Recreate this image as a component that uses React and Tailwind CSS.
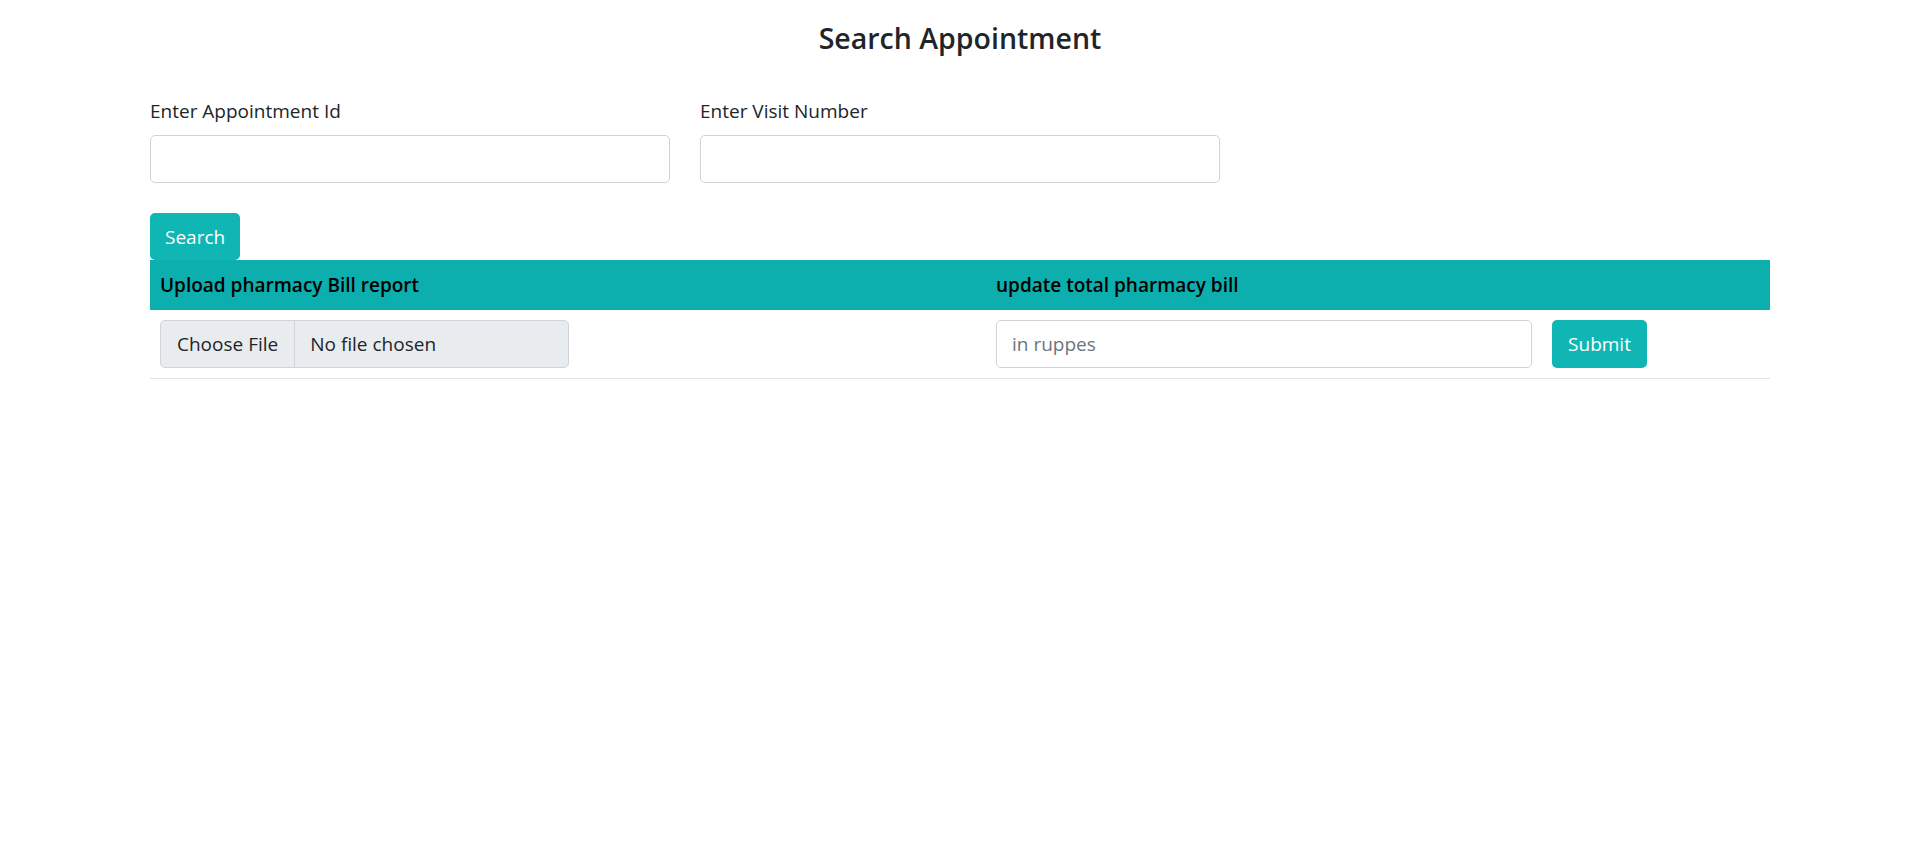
import React from "react";

export default function App() {
  return (
    <div className="min-h-screen bg-white text-[#212529] font-['Open_Sans',_'Noto_Sans',_sans-serif]">
      <div className="mx-auto w-[1650px] px-[15px]">
        {/* Title */}
        <h4 className="pt-[20px] text-center text-[28.5px] font-semibold leading-[36px] text-[#212529]">
          Search Appointment
        </h4>

        {/* Search fields */}
        <div className="mt-[40px] flex gap-[30px]">
          <div className="w-[520px]">
            <label className="block text-[19px] leading-[30px]">Enter Appointment Id</label>
            <input
              type="text"
              className="mt-[9px] block h-[48px] w-full rounded-[5px] border border-[#ced4da] px-[15px] text-[19px] outline-none"
            />
          </div>
          <div className="w-[520px]">
            <label className="block text-[19px] leading-[30px]">Enter Visit Number</label>
            <input
              type="text"
              className="mt-[9px] block h-[48px] w-full rounded-[5px] border border-[#ced4da] px-[15px] text-[19px] outline-none"
            />
          </div>
        </div>

        <button className="mt-[30px] block h-[47px] rounded-[5px] bg-[#10b6b4] px-[15px] text-[19px] leading-[30px] text-white">
          Search
        </button>

        {/* Pharmacy table */}
        <table className="w-full border-collapse">
          <thead>
            <tr className="h-[50px] bg-[#0caeae] text-left text-black">
              <th className="w-[836px] px-[10px] text-[19px] font-semibold">Upload pharmacy Bill report</th>
              <th className="px-[10px] text-[19px] font-semibold">update total pharmacy bill</th>
            </tr>
          </thead>
          <tbody>
            <tr className="border-b border-[#dee2e6]">
              <td className="p-[10px] align-middle">
                <div className="flex h-[48px] w-[409px] items-stretch overflow-hidden rounded-[5px] border border-[#ced4da] bg-[#e9ecef] text-[19px]">
                  <span className="flex items-center border-r border-[#ced4da] px-[16px]">Choose File</span>
                  <span className="flex items-center px-[15px]">No file chosen</span>
                </div>
              </td>
              <td className="p-[10px] align-middle">
                <div className="flex items-center gap-[20px]">
                  <input
                    type="text"
                    placeholder="in ruppes"
                    className="h-[48px] w-[536px] rounded-[5px] border border-[#ced4da] px-[15px] text-[19px] outline-none placeholder:text-[#6c757d]"
                  />
                  <button className="h-[48px] w-[95px] rounded-[5px] bg-[#10b6b4] text-[19px] text-white">
                    Submit
                  </button>
                </div>
              </td>
            </tr>
          </tbody>
        </table>
      </div>
    </div>
  );
}
